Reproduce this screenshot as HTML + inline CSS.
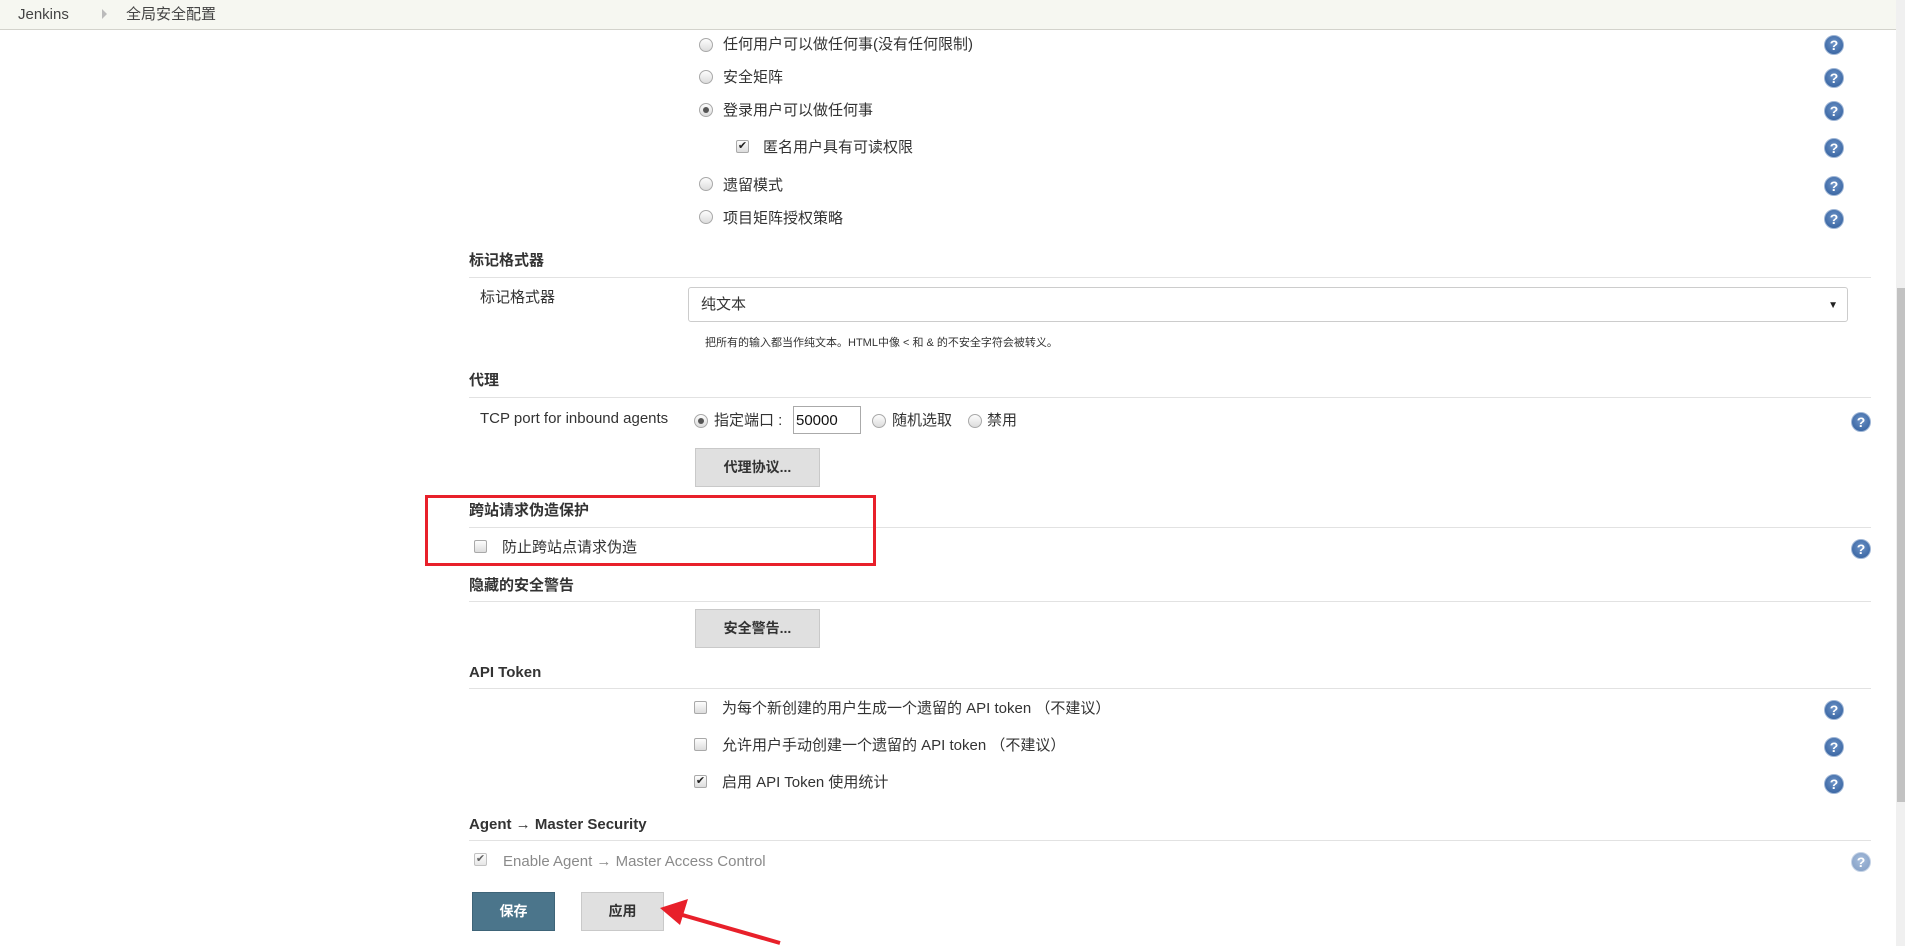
<!DOCTYPE html>
<html><head><meta charset="utf-8"><style>
*{margin:0;padding:0;box-sizing:border-box}
body{width:1905px;height:946px;overflow:hidden;background:#fff;font-family:"Liberation Sans","Noto Sans CJK SC",sans-serif;font-size:15px;color:#333;position:relative}
.a{position:absolute;white-space:nowrap;line-height:18px}
.hdr{position:absolute;left:0;top:0;width:1896px;height:30px;background:#f6f7f1;border-bottom:1px solid #d3d3cc}
.sb{position:absolute;left:1896px;top:0;width:9px;height:946px;background:#f0f0f0}
.sbt{position:absolute;left:1897px;top:288px;width:8px;height:514px;background:#c2c2c2}
.rad{position:absolute;width:14px;height:14px;border-radius:50%;border:1px solid #a9a9a9;background:linear-gradient(#fdfdfd,#dcdcdc)}
.rad.on::after{content:"";position:absolute;left:3px;top:3px;width:6px;height:6px;border-radius:50%;background:#555}
.cb{position:absolute;width:13px;height:13px;border-radius:2px;border:1px solid #a9a9a9;background:linear-gradient(#fdfdfd,#dcdcdc);font-size:11px;line-height:11px;text-align:center;color:#222}
.help{position:absolute;width:20px;height:20px;border-radius:50%;background:radial-gradient(circle at 50% 40%,#6d93c7,#2c5a99);border:1px solid #9fb6d6;color:#fff;font-weight:bold;font-size:14px;line-height:18px;text-align:center}
.h{position:absolute;left:469px;font-weight:bold;font-size:15px;color:#333;line-height:18px}
.ln{position:absolute;left:469px;width:1402px;height:1px;background:#e2e2e2}
.btn{position:absolute;background:#e0e0e0;border:1px solid #c9c9c9;font-weight:bold;font-size:14px;color:#333;text-align:center}
</style></head><body>
<div class="hdr"></div>
<div class="a" style="left:18px;top:5px;font-size:15px;line-height:20px;color:#444">Jenkins</div>
<div class="a" style="left:102px;top:9px;width:0;height:0;border-left:5px solid #bbb;border-top:5px solid transparent;border-bottom:5px solid transparent"></div>
<div class="a" style="left:126px;top:5px;font-size:15px;line-height:20px;color:#444">全局安全配置</div>
<div class="sb"></div><div class="sbt"></div>

<div class="rad" style="left:699px;top:38px"></div><div class="a" style="left:723px;top:36px">任何用户可以做任何事(没有任何限制)</div>
<div class="rad" style="left:699px;top:70px"></div><div class="a" style="left:723px;top:69px">安全矩阵</div>
<div class="rad on" style="left:699px;top:103px"></div><div class="a" style="left:723px;top:102px">登录用户可以做任何事</div>
<div class="cb" style="left:736px;top:140px">✔</div><div class="a" style="left:763px;top:139px">匿名用户具有可读权限</div>
<div class="rad" style="left:699px;top:177px"></div><div class="a" style="left:723px;top:177px">遗留模式</div>
<div class="rad" style="left:699px;top:210px"></div><div class="a" style="left:723px;top:210px">项目矩阵授权策略</div>
<div class="help" style="left:1824px;top:35px">?</div>
<div class="help" style="left:1824px;top:68px">?</div>
<div class="help" style="left:1824px;top:101px">?</div>
<div class="help" style="left:1824px;top:138px">?</div>
<div class="help" style="left:1824px;top:176px">?</div>
<div class="help" style="left:1824px;top:209px">?</div>

<div class="h" style="top:252px">标记格式器</div><div class="ln" style="top:277px"></div>
<div class="a" style="left:480px;top:289px">标记格式器</div>
<div class="a" style="left:688px;top:287px;width:1160px;height:35px;border:1px solid #ccc;border-radius:3px;padding:8px 12px;background:#fff">纯文本<span style="position:absolute;right:9px;top:9px;font-size:10px;color:#222">▼</span></div>
<div class="a" style="left:705px;top:334px;font-size:11px">把所有的输入都当作纯文本。HTML中像 &lt; 和 &amp; 的不安全字符会被转义。</div>

<div class="h" style="top:372px">代理</div><div class="ln" style="top:397px"></div>
<div class="a" style="left:480px;top:410px">TCP port for inbound agents</div>
<div class="rad on" style="left:694px;top:414px"></div><div class="a" style="left:714px;top:412px">指定端口 :</div>
<div class="a" style="left:793px;top:406px;width:68px;height:28px;border:1px solid #aaa;padding:5px 2px;font-size:15px;color:#111">50000</div>
<div class="rad" style="left:872px;top:414px"></div><div class="a" style="left:892px;top:412px">随机选取</div>
<div class="rad" style="left:968px;top:414px"></div><div class="a" style="left:987px;top:412px">禁用</div>
<div class="help" style="left:1851px;top:412px">?</div>
<div class="btn" style="left:695px;top:448px;width:125px;height:39px;line-height:37px">代理协议...</div>

<div class="h" style="top:502px">跨站请求伪造保护</div><div class="ln" style="top:527px"></div>
<div class="cb" style="left:474px;top:540px"></div><div class="a" style="left:502px;top:539px">防止跨站点请求伪造</div>
<div class="help" style="left:1851px;top:539px">?</div>
<div class="a" style="left:425px;top:495px;width:451px;height:71px;border:3px solid #e8202a"></div>

<div class="h" style="top:577px">隐藏的安全警告</div><div class="ln" style="top:601px"></div>
<div class="btn" style="left:695px;top:609px;width:125px;height:39px;line-height:37px">安全警告...</div>

<div class="h" style="top:664px">API Token</div><div class="ln" style="top:688px"></div>
<div class="cb" style="left:694px;top:701px"></div><div class="a" style="left:722px;top:700px">为每个新创建的用户生成一个遗留的 API token （不建议）</div>
<div class="cb" style="left:694px;top:738px"></div><div class="a" style="left:722px;top:737px">允许用户手动创建一个遗留的 API token （不建议）</div>
<div class="cb" style="left:694px;top:775px">✔</div><div class="a" style="left:722px;top:774px">启用 API Token 使用统计</div>
<div class="help" style="left:1824px;top:700px">?</div>
<div class="help" style="left:1824px;top:737px">?</div>
<div class="help" style="left:1824px;top:774px">?</div>

<div class="h" style="top:816px">Agent → Master Security</div><div class="ln" style="top:840px"></div>
<div class="cb" style="left:474px;top:853px;opacity:.7">✔</div><div class="a" style="left:503px;top:853px;color:#8a8a8a">Enable Agent → Master Access Control</div>
<div class="help" style="left:1851px;top:852px;opacity:.6">?</div>

<div class="a" style="left:472px;top:892px;width:83px;height:39px;background:#4b758b;border:1px solid #3e6478;color:#fff;font-weight:bold;font-size:14px;text-align:center;line-height:37px">保存</div>
<div class="btn" style="left:581px;top:892px;width:83px;height:39px;line-height:37px">应用</div>
<svg class="a" style="left:650px;top:895px" width="140" height="51"><line x1="130" y1="48" x2="22" y2="17" stroke="#e8202a" stroke-width="4"/><polygon points="10,13 38,4 30,30" fill="#e8202a"/></svg>
</body></html>
